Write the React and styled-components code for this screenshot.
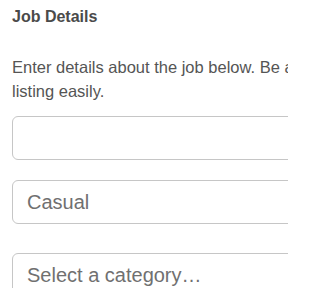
import React from "react";
import styled, { createGlobalStyle } from "styled-components";

const Global = createGlobalStyle`
  html, body {
    margin: 0;
    padding: 0;
    background: #ffffff;
    overflow: hidden;
  }
  body {
    font-family: "Liberation Sans", Arial, sans-serif;
  }
`;

const Page = styled.div`
  width: 288px;
  height: 288px;
  overflow: hidden;
  padding: 8px 0 0 12px;
  box-sizing: border-box;
`;

const Heading = styled.h3`
  margin: 0;
  font-size: 16px;
  font-weight: 700;
  line-height: 18px;
  color: #4a4a4a;
`;

const Intro = styled.p`
  margin: 29px 0 0;
  width: 600px;
  font-size: 16.5px;
  line-height: 24px;
  color: #555555;
  white-space: nowrap;
`;

const Form = styled.form`
  display: flex;
  flex-direction: column;
  margin-top: 13px;
`;

const FieldWrap = styled.div`
  margin-top: ${(p) => p.$gap || 0}px;
`;

const fieldCss = `
  display: block;
  width: 560px;
  height: 44px;
  box-sizing: border-box;
  border: 1px solid #c6c6c6;
  border-radius: 6px;
  padding: 0 14px;
  font-family: "Liberation Sans", Arial, sans-serif;
  font-size: 20px;
  color: #707070;
  background: #ffffff;
  outline: none;
`;

const TextInput = styled.input`
  ${fieldCss}
`;

const Select = styled.select`
  ${fieldCss}
  appearance: none;
  -webkit-appearance: none;
`;

export default function App() {
  return (
    <>
      <Global />
      <Page>
        <Heading>Job Details</Heading>
        <Intro>
          Enter details about the job below. Be as specific as you can so candidates find your
          <br />
          listing easily.
        </Intro>
        <Form onSubmit={(e) => e.preventDefault()}>
          <FieldWrap>
            <TextInput type="text" aria-label="Job title" defaultValue="" />
          </FieldWrap>
          <FieldWrap $gap={20}>
            <TextInput type="text" aria-label="Job type" defaultValue="Casual" readOnly />
          </FieldWrap>
          <FieldWrap $gap={29}>
            <Select aria-label="Category" defaultValue="">
              <option value="">Select a category…</option>
              <option value="hospitality">Hospitality</option>
              <option value="retail">Retail</option>
            </Select>
          </FieldWrap>
        </Form>
      </Page>
    </>
  );
}
